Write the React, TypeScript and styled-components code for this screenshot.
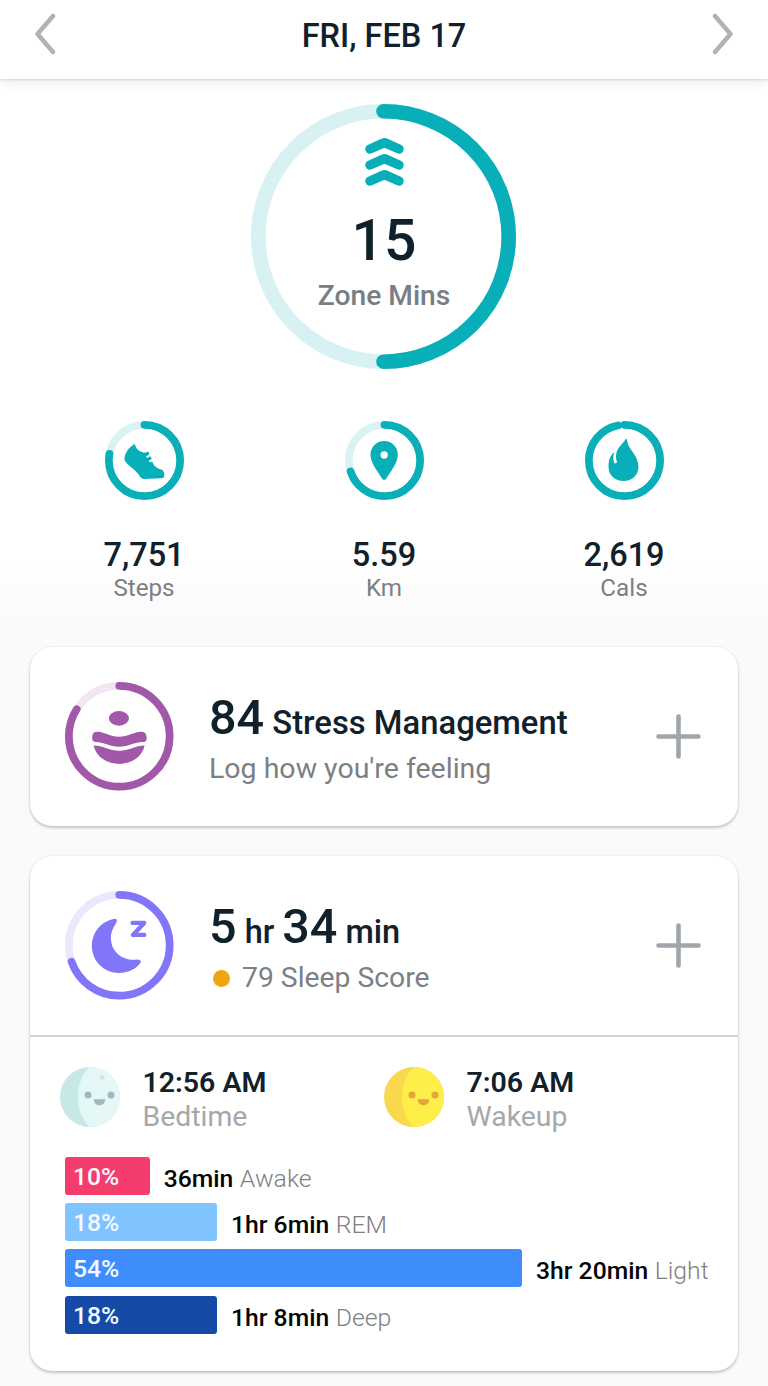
import React from "react";
import styled, { createGlobalStyle } from "styled-components";

const TEAL = "#08afb9";
const INK = "#10212b";

const GlobalStyle = createGlobalStyle`
  * { box-sizing: border-box; }
  body { margin: 0; background: #fafafa; font-family: Roboto, "Liberation Sans", sans-serif; }
`;

const Page = styled.main`
  width: 768px;
  height: 1386px;
  overflow: hidden;
  display: flex;
  flex-direction: column;
  background: linear-gradient(#fff 0, #fff 560px, #fafafa 625px);
`;

const Header = styled.header`
  flex: none;
  height: 79px;
  padding: 0 33px 10px;
  display: flex;
  align-items: center;
  justify-content: space-between;
  background: #fff;
  box-shadow: 0 1px 2px rgba(0, 0, 0, 0.12), 0 3px 12px rgba(0, 0, 0, 0.08);
`;

const Text = styled.span<{ $size: number; $line: number; $weight?: number; $color?: string }>`
  display: block;
  white-space: nowrap;
  font-size: ${(p) => p.$size}px;
  line-height: ${(p) => p.$line}px;
  font-weight: ${(p) => p.$weight ?? 400};
  color: ${(p) => p.$color ?? INK};
`;

const DateTitle = styled.h1`
  margin: 0;
  padding-top: 2px;
`;

const Hero = styled.section`
  flex: none;
  height: 342px;
  padding: 25px 1px 0 0;
  display: flex;
  justify-content: center;
`;

const RingBox = styled.div<{ $size: number }>`
  flex: none;
  width: ${(p) => p.$size}px;
  height: ${(p) => p.$size}px;
  display: grid;
  > * { grid-area: 1 / 1; }
`;

const HeroLabel = styled.div`
  display: flex;
  flex-direction: column;
  align-items: center;
  padding: 32px 0 0 1px;
`;

const HeroValue = styled.div`
  padding-top: 20px;
`;

const Stats = styled.section`
  flex: none;
  height: 226px;
  padding: 0 24px;
  display: grid;
  grid-template-columns: repeat(3, 1fr);
`;

const Stat = styled.div`
  display: flex;
  flex-direction: column;
  align-items: center;
`;

const StatText = styled.div`
  padding-top: 35px;
  display: flex;
  flex-direction: column;
  align-items: center;
`;

const Card = styled.section<{ $height: number }>`
  flex: none;
  height: ${(p) => p.$height}px;
  margin: 0 30px 30px;
  border-radius: 22px;
  background: #fff;
  box-shadow: 0 2px 3px rgba(0, 0, 0, 0.2), 0 0 2px rgba(0, 0, 0, 0.12);
`;

const CardTop = styled.div`
  height: 179px;
  padding: 0 37px 0 35px;
  display: flex;
  align-items: center;
`;

const CardBody = styled.div`
  flex: 1;
  padding: 6px 0 0 35.5px;
`;

const Title = styled.div`
  display: flex;
  align-items: baseline;
  height: 58px;
`;

const Sub = styled.div`
  display: flex;
  align-items: center;
  height: 42px;
`;

const Dot = styled.i`
  width: 17px;
  height: 17px;
  margin: 2px 12px 0 4px;
  border-radius: 50%;
  background: #efa50f;
`;

const Divider = styled.hr`
  height: 2px;
  margin: 0;
  border: 0;
  background: #d3d4d6;
`;

const Times = styled.div`
  padding: 30px 0 0 29.500px;
  display: grid;
  grid-template-columns: 324px 1fr;
`;

const Time = styled.div`
  display: flex;
  gap: 23px;
`;

const Bars = styled.div`
  display: flex;
  flex-direction: column;
  gap: 8.2px;
  padding: 22px 0 0 35px;
`;

const BarRow = styled.div`
  display: flex;
  height: 38px;
`;

const Bar = styled.div<{ $color: string }>`
  flex: none;
  padding: 2px 0 0 8px;
  border-radius: 3px;
  background: ${(p) => p.$color};
`;

const BarText = styled.div`
  display: flex;
  gap: 6.500px;
  padding: 4px 0 0 13.7px;
`;

type RingProps = { size: number; stroke: number; value: number; color: string; track: string; children?: React.ReactNode };

const Ring = ({ size, stroke, value, color, track, children }: RingProps) => {
  const r = (size - stroke) / 2;
  return (
    <svg width={size} height={size} viewBox={`${-size / 2} ${-size / 2} ${size} ${size}`}>
      <g fill="none" strokeWidth={stroke}>
        <circle r={r} stroke={track} />
        <circle r={r} stroke={color} strokeLinecap="round" pathLength={100}
          strokeDasharray={`${value} 100`} transform="rotate(-90)" />
      </g>
      <g fill={color}>{children}</g>
    </svg>
  );
};

const Shoe = () => (
  <path transform="scale(.33333) translate(-163 -151.5)"
    d="M134 102C136 108 138 117 147 122C155 126 163 131 170 126L176 126L177 134L168 139L170 144L181 139L185 146L176 152L179 157L187 155C190 168 200 174 212 178C221 181 224 190 222 200Q221 204 214 205L160 207Q154 206 150 200C140 182 122 172 108 158Q101 150 103 142C108 120 122 108 134 102Z" />
);

const Pin = () => (
  <path fillRule="evenodd" transform="scale(.33333) translate(-162 -151.5)"
    d="M161 93C184 93 202 111 202 134C202 160 176 190 167 206Q161 213 155 206C146 190 120 160 120 134C120 111 138 93 161 93ZM161 124A11 11 0 1 0 161 146A11 11 0 1 0 161 124Z" />
);

const Flame = () => (
  <path transform="scale(.33333) translate(-162 -151.5)"
    d="M166 86Q170 86 170 92C173 118 204 136 204 170C204 196 184 213 159 213C134 213 114 196 114 170C114 150 120 135 131 127C127 142 128 153 133 161L140 157C134 144 136 129 142 118C149 105 160 98 166 86Z" />
);

const Calm = () => (
  <g transform="scale(.33333) translate(-298 -289.5)">
    <ellipse cx="297" cy="236" rx="30" ry="22" />
    <path d="M217 292Q217 275 233 276C255 277 270 291 297 291C325 291 340 277 362 276Q379 275 380 292L380 299Q378 307 368 307C345 307 325 321 298 321C270 321 250 307 228 307Q217 306 217 298Z" />
    <path d="M221 317C250 317 270 333 298 333C326 333 346 317 374 317C368 350 335 372 298 372C260 372 228 350 221 317Z" />
  </g>
);

const Moon = () => (
  <g transform="scale(.33333) translate(-298 -286)">
    <path d="M282 207Q292 205 291 214C287 224 273 240 273 264C273 302 304 334 352 329Q365 329 362 338C350 357 326 369 298 369C252 369 216 333 216 288C216 246 244 214 282 207Z" />
    <path d="M338 219H373L339 255H373" fill="none" stroke="#8176f8" strokeWidth="13" strokeLinecap="round" strokeLinejoin="round" />
  </g>
);

const Face = ({ shade, light, ink, crater }: { shade: string; light: string; ink: string; crater?: string }) => (
  <svg width="60" height="60" viewBox="-90 -90 180 180">
    <circle r="90" fill={shade} />
    <path d="M0-90A90 90 0 0 1 0 90C-48 52-48-52 0-90Z" fill={light} />
    {crater && <circle cx="36" cy="-59" r="7" fill={crater} />}
    <g fill={ink}>
      <circle cx="-6" cy="-6" r="10.5" />
      <circle cx="63" cy="-6" r="10.5" />
      <path d="M11 7H46C45 18 38 25 28 25S12 18 11 7Z" />
    </g>
  </svg>
);

const Chevron = ({ d }: { d: string }) => (
  <svg width="24" height="44" viewBox="0 1 24 44" fill="none" stroke="#b1b2b3" strokeWidth="4.5" strokeLinecap="round" strokeLinejoin="round">
    <path d={d} />
  </svg>
);

const Plus = () => (
  <svg width="45" height="45" viewBox="0 0 45 45" fill="none" stroke="#9fa5aa" strokeWidth="4.6" strokeLinecap="round">
    <path d="M22.5 2.5V42.5M2.5 22.5H42.5" />
  </svg>
);

const stats = [
  { value: "7,751", label: "Steps", progress: 78, icon: <Shoe /> },
  { value: "5.59", label: "Km", progress: 70, icon: <Pin /> },
  { value: "2,619", label: "Cals", progress: 97, icon: <Flame /> },
];

const stages = [
  { pct: "10%", width: 85, color: "#f43d6d", time: "36min", name: "Awake" },
  { pct: "18%", width: 152.3, color: "#7fc3ff", time: "1hr 6min", name: "REM" },
  { pct: "54%", width: 457.3, color: "#3f8dfd", time: "3hr 20min", name: "Light" },
  { pct: "18%", width: 152.3, color: "#154ba6", time: "1hr 8min", name: "Deep" },
];

export default function App() {
  return (
    <Page>
      <GlobalStyle />
      <Header>
        <Chevron d="M20 4L4.500 22L20 40" />
        <DateTitle><Text $size={32.5} $line={40} $weight={500}>FRI, FEB 17</Text></DateTitle>
        <Chevron d="M4 4L19.500 22L4 40" />
      </Header>
      <Hero>
        <RingBox $size={265}>
          <Ring size={265} stroke={14.6} value={50} color={TEAL} track="#d8f2f3" />
          <HeroLabel>
            <svg width="40" height="52" viewBox="0 0 40 52" fill="none" stroke={TEAL} strokeWidth="9.4" strokeLinecap="round" strokeLinejoin="round">
              <path d="M6 13L20.500 6.600L35 13M6 29L20.500 22.600L35 29M6 45L20.500 38.600L35 45" />
            </svg>
            <HeroValue><Text $size={57} $line={66} $weight={500}>15</Text></HeroValue>
            <Text $size={28.2} $line={44} $weight={500} $color="#777e84">Zone Mins</Text>
          </HeroLabel>
        </RingBox>
      </Hero>
      <Stats>
        {stats.map((s) => (
          <Stat key={s.label}>
            <Ring size={79} stroke={7.7} value={s.progress} color={TEAL} track="#daf2f3">{s.icon}</Ring>
            <StatText>
              <Text $size={32.5} $line={40} $weight={500}>{s.value}</Text>
              <Text $size={24.2} $line={27} $color="#7b8084">{s.label}</Text>
            </StatText>
          </Stat>
        ))}
      </Stats>
      <Card $height={179}>
        <CardTop>
          <Ring size={108.5} stroke={7.7} value={84} color="#a158a8" track="#f3e6f3"><Calm /></Ring>
          <CardBody>
            <Title>
              <Text $size={48.5} $line={56} $weight={500}>84</Text>
              <Text $size={32.8} $line={40} $weight={500}>&nbsp;Stress Management</Text>
            </Title>
            <Sub><Text $size={28.5} $line={40} $color="#7b8084">Log how you're feeling</Text></Sub>
          </CardBody>
          <Plus />
        </CardTop>
      </Card>
      <Card $height={515}>
        <CardTop>
          <Ring size={108.5} stroke={7.7} value={69.7} color="#8176f8" track="#ebe8fd"><Moon /></Ring>
          <CardBody>
            <Title>
              <Text $size={48.5} $line={56} $weight={500}>5</Text>
              <Text $size={32.5} $line={40} $weight={500}>&nbsp;hr&nbsp;</Text>
              <Text $size={48.5} $line={56} $weight={500}>34</Text>
              <Text $size={32.5} $line={40} $weight={500}>&nbsp;min</Text>
            </Title>
            <Sub><Dot /><Text $size={28.3} $line={40} $color="#7b8084">79 Sleep Score</Text></Sub>
          </CardBody>
          <Plus />
        </CardTop>
        <Divider />
        <Times>
          <Time>
            <Face shade="#c6e9e8" light="#e5f7f7" ink="#9dbcba" crater="#c9e5e4" />
            <div>
              <Text $size={28.5} $line={32} $weight={600}>12:56 AM</Text>
              <Text $size={28.4} $line={36} $color="#a5a8aa">Bedtime</Text>
            </div>
          </Time>
          <Time>
            <Face shade="#fad84e" light="#fdee49" ink="#e5a43c" />
            <div>
              <Text $size={28.5} $line={32} $weight={600}>7:06 AM</Text>
              <Text $size={28.4} $line={36} $color="#a5a8aa">Wakeup</Text>
            </div>
          </Time>
        </Times>
        <Bars>
          {stages.map((s) => (
            <BarRow key={s.name}>
              <Bar $color={s.color} style={{ width: s.width }}>
                <Text $size={24.7} $line={36} $weight={500} $color="#f3faff">{s.pct}</Text>
              </Bar>
              <BarText>
                <Text $size={24.7} $line={36} $weight={500} $color="#050505">{s.time}</Text>
                <Text $size={24.8} $line={36} $weight={300} $color="#808080">{s.name}</Text>
              </BarText>
            </BarRow>
          ))}
        </Bars>
      </Card>
    </Page>
  );
}
